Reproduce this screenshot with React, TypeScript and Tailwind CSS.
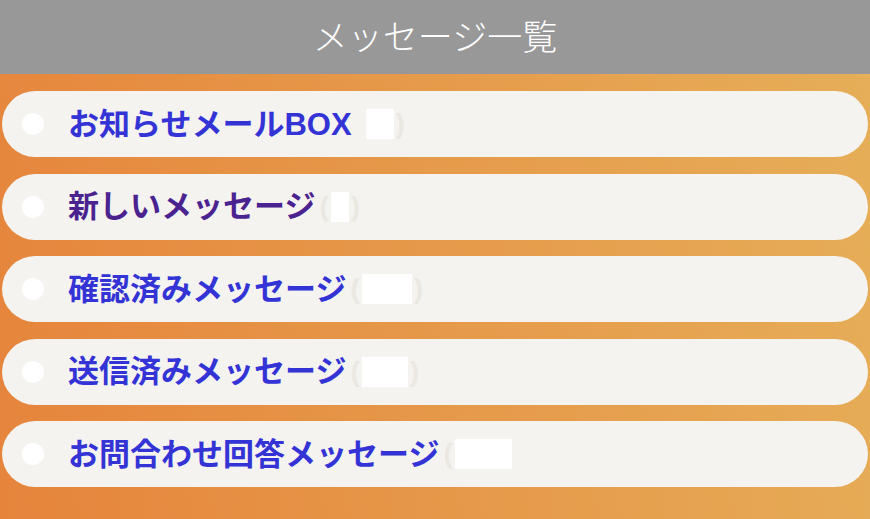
import React from 'react';

type Item = {
  label: string;
  color: string;
  open: boolean;
  boxW: string;
  close: boolean;
  gap: string;
};

const items: Item[] = [
  { label: 'お知らせメールBOX', color: 'text-[#3333d6]', open: false, boxW: 'w-[28px]', close: true, gap: 'ml-[14px]' },
  { label: '新しいメッセージ', color: 'text-[#4b2390]', open: true, boxW: 'w-[18px]', close: true, gap: 'ml-[4px]' },
  { label: '確認済みメッセージ', color: 'text-[#3333d6]', open: true, boxW: 'w-[50px]', close: true, gap: 'ml-[4px]' },
  { label: '送信済みメッセージ', color: 'text-[#3333d6]', open: true, boxW: 'w-[46px]', close: true, gap: 'ml-[4px]' },
  { label: 'お問合わせ回答メッセージ', color: 'text-[#3333d6]', open: true, boxW: 'w-[57px]', close: false, gap: 'ml-[4px]' },
];

const MessageRow = ({ item }: { item: Item }) => (
  <div className="flex h-[66px] items-center rounded-full bg-[#f4f3ef] pl-[20px]">
    <span className="h-[22px] w-[22px] shrink-0 rounded-full bg-white" />
    <span className={`ml-[24px] text-[31px] font-bold leading-none ${item.color}`}>{item.label}</span>
    <span className={`${item.gap} flex items-center gap-[2px] text-[28px] font-bold leading-none text-[#ebe8e1]`}>
      {item.open && <span>(</span>}
      <span className={`h-[30px] ${item.boxW} bg-white`} />
      {item.close && <span>)</span>}
    </span>
  </div>
);

export default function App() {
  return (
    <div
      className="flex h-[519px] w-[870px] flex-col overflow-hidden"
      style={{ fontFamily: '"Liberation Sans", "Noto Sans CJK JP", sans-serif' }}
    >
      <header className="flex h-[74px] shrink-0 items-center justify-center bg-[#989898]">
        <h1 className="text-[35px] font-light leading-none text-white">メッセージ一覧</h1>
      </header>
      <main className="flex flex-1 flex-col gap-[16.5px] bg-linear-[80deg] from-[#e6843c] to-[#e6ae58] px-[2px] pt-[17px]">
        {items.map((item) => (
          <MessageRow key={item.label} item={item} />
        ))}
      </main>
    </div>
  );
}
